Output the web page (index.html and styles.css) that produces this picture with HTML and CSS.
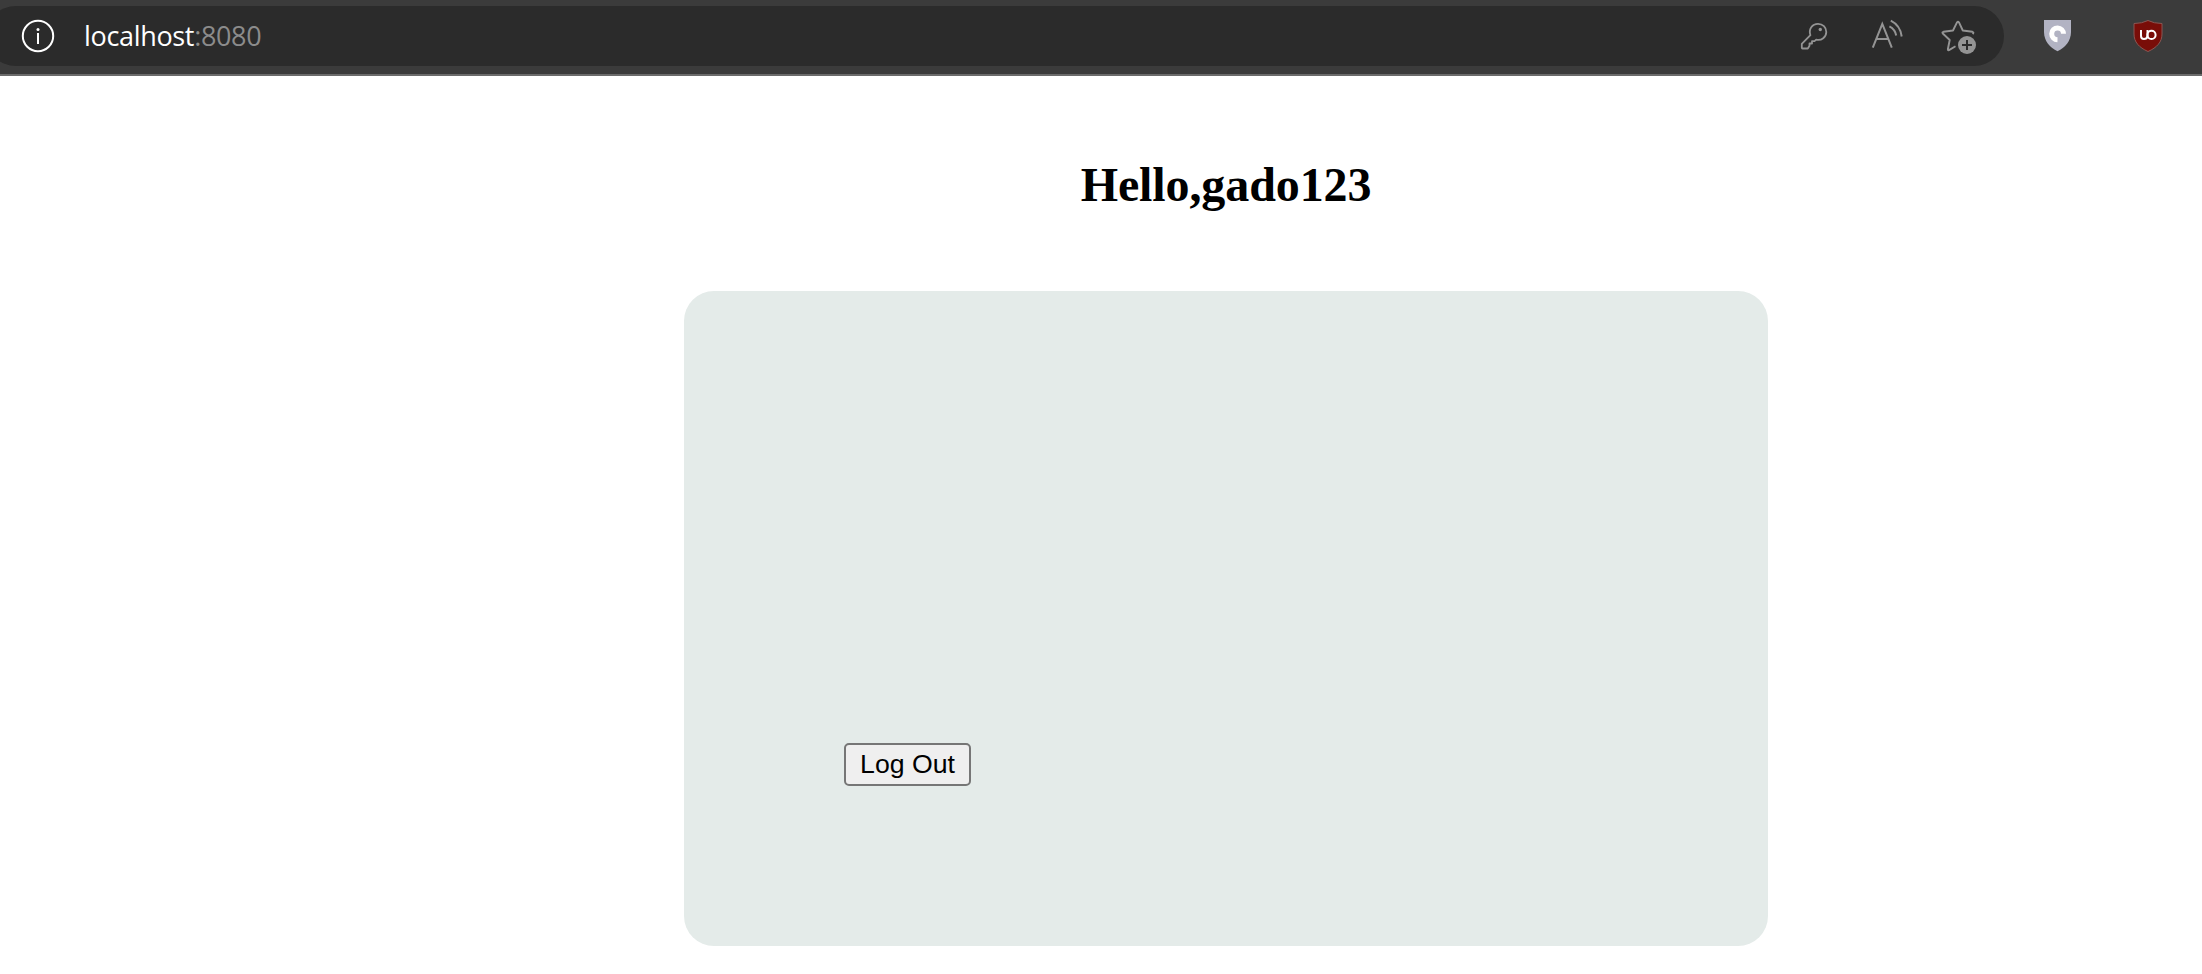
FILE: index.html
```html
<!DOCTYPE html>
<html lang="en">
<head>
<meta charset="utf-8">
<title>localhost</title>
<link rel="stylesheet" href="styles.css">
</head>
<body>
<header class="toolbar">
  <div class="address">
    <svg class="info" width="34" height="34" viewBox="0 0 34 34"><circle cx="17" cy="17" r="15.2" fill="none" stroke="#fff" stroke-width="2"/><path d="M17 14v11" stroke="#fff" stroke-width="2"/><circle cx="17" cy="10.4" r="1.5" fill="#fff"/></svg>
    <div class="url"><span class="host">localhost</span><span class="port">:8080</span></div>
    <div class="actions">
      <svg class="key" width="28" height="28" viewBox="0 0 28 28" fill="none" stroke="#949494" stroke-width="1.8" stroke-linejoin="round"><path d="M10.4 13.2C8.300 7 12.300 1.800 18 1.800C22.800 1.800 26.300 5.500 26.300 10C26.300 15 21.500 19 16.200 17.600L14.500 19.200H12V21.500H9.500V23.800L7.800 26.500H2.500Q1.800 26.500 1.800 25.500V21.800Z"/><circle cx="20.300" cy="7.500" r="1.700" fill="#949494" stroke="none"/></svg>
      <svg class="read-aloud" width="32" height="30" viewBox="0 0 32 30" fill="none" stroke="#949494" stroke-width="2"><path d="M1.800 28.700L11.300 5L20.800 28.700M5.200 20H17.400"/><path d="M18.400 7.300Q24.200 10.300 25.200 16.500M19.800 1.700Q29.300 6.500 30.700 17.500"/></svg>
      <svg class="favorite" width="36" height="36" viewBox="0 0 36 36"><path d="M15.500 28.200L9 32.100Q7.600 32.600 7.900 31L9.700 22L2.800 15.500Q1.800 14.200 3.400 13.800L13 12.500L17 4.400Q18 2.800 19 4.400L22.800 12.500L32.500 13.800Q34.300 14.300 32.600 16" fill="none" stroke="#949494" stroke-width="1.900" stroke-linejoin="round"/><circle cx="27" cy="27" r="9" fill="#949494"/><path d="M27 22v10M22 27h10" stroke="#2b2b2b" stroke-width="2"/></svg>
    </div>
  </div>
  <svg class="guard" width="28" height="32" viewBox="0 0 28 32"><path d="M0 0H27V12C27 21 21 28 13.500 31.200C6 28 0 21 0 12Z" fill="#b2b3c3"/><path d="M13.500 19.700A5.900 5.900 0 1 1 19.500 13.800" fill="none" stroke="#fff" stroke-width="5"/></svg>
  <svg class="shield" width="30" height="34" viewBox="0 0 30 34"><path d="M1 4.500Q9 4.500 15 1.500Q21 4.500 29 4.500V15C29 23 24 28.500 15 32.500C6 28.500 1 23 1 15Z" fill="#790d08" stroke="#8b5753"/><path d="M8 11V17Q8 20 11 20T14.500 17V11" fill="none" stroke="#fff" stroke-width="2"/><circle cx="18.500" cy="15.900" r="4.100" fill="none" stroke="#fff" stroke-width="2"/></svg>
</header>
<main class="page">
  <h1 class="greeting">Hello,gado123</h1>
  <section class="card"><button class="logout" type="button">Log Out</button></section>
</main>
</body>
</html>
```
FILE: styles.css
```css
body {
  margin: 0;
  background: #fff;
  overflow: hidden;
}
.toolbar {
  box-sizing: border-box;
  height: 76px;
  padding-top: 6px;
  display: flex;
  align-items: flex-start;
  background: #3b3b3b;
  border-bottom: 2px solid #6b6b6b;
}
.toolbar svg {
  display: block;
  flex: none;
}
.address {
  box-sizing: border-box;
  width: 2018px;
  height: 60px;
  margin-left: -14px;
  padding: 0 28px 0 35px;
  border-radius: 30px;
  background: #2b2b2b;
  display: flex;
  align-items: center;
  flex: none;
}
.url {
  margin-left: 29px;
  font: 27px/36px "Open Sans", sans-serif;
  letter-spacing: -0.33px;
  white-space: nowrap;
}
.host { color: #fff; }
.port { color: #8c8c8c; }
.actions {
  margin-left: auto;
  display: flex;
  align-items: center;
}
.read-aloud { margin: 0 37px 4px 43px; }
.guard { margin: 14px 0 0 40px; }
.shield { margin: 13px 0 0 61px; }
.page {
  width: 1084px;
  margin-left: 684px;
  padding-top: 81px;
}
.greeting {
  margin: 0;
  font: bold 48px/56px "Liberation Serif", "Times New Roman", serif;
  letter-spacing: -0.1px;
  text-align: center;
  color: #000;
}
.card {
  box-sizing: border-box;
  height: 655px;
  margin-top: 78px;
  padding: 0 0 160px 160px;
  border-radius: 30px;
  background: #e4ebe9;
  display: flex;
  align-items: flex-end;
}
.logout {
  box-sizing: border-box;
  width: 127px;
  height: 43px;
  padding: 0 0 2px;
  border: 2px solid #767676;
  border-radius: 5px;
  background: #efefef;
  color: #000;
  font: 26.67px/30px "Liberation Sans", Arial, sans-serif;
}
```
